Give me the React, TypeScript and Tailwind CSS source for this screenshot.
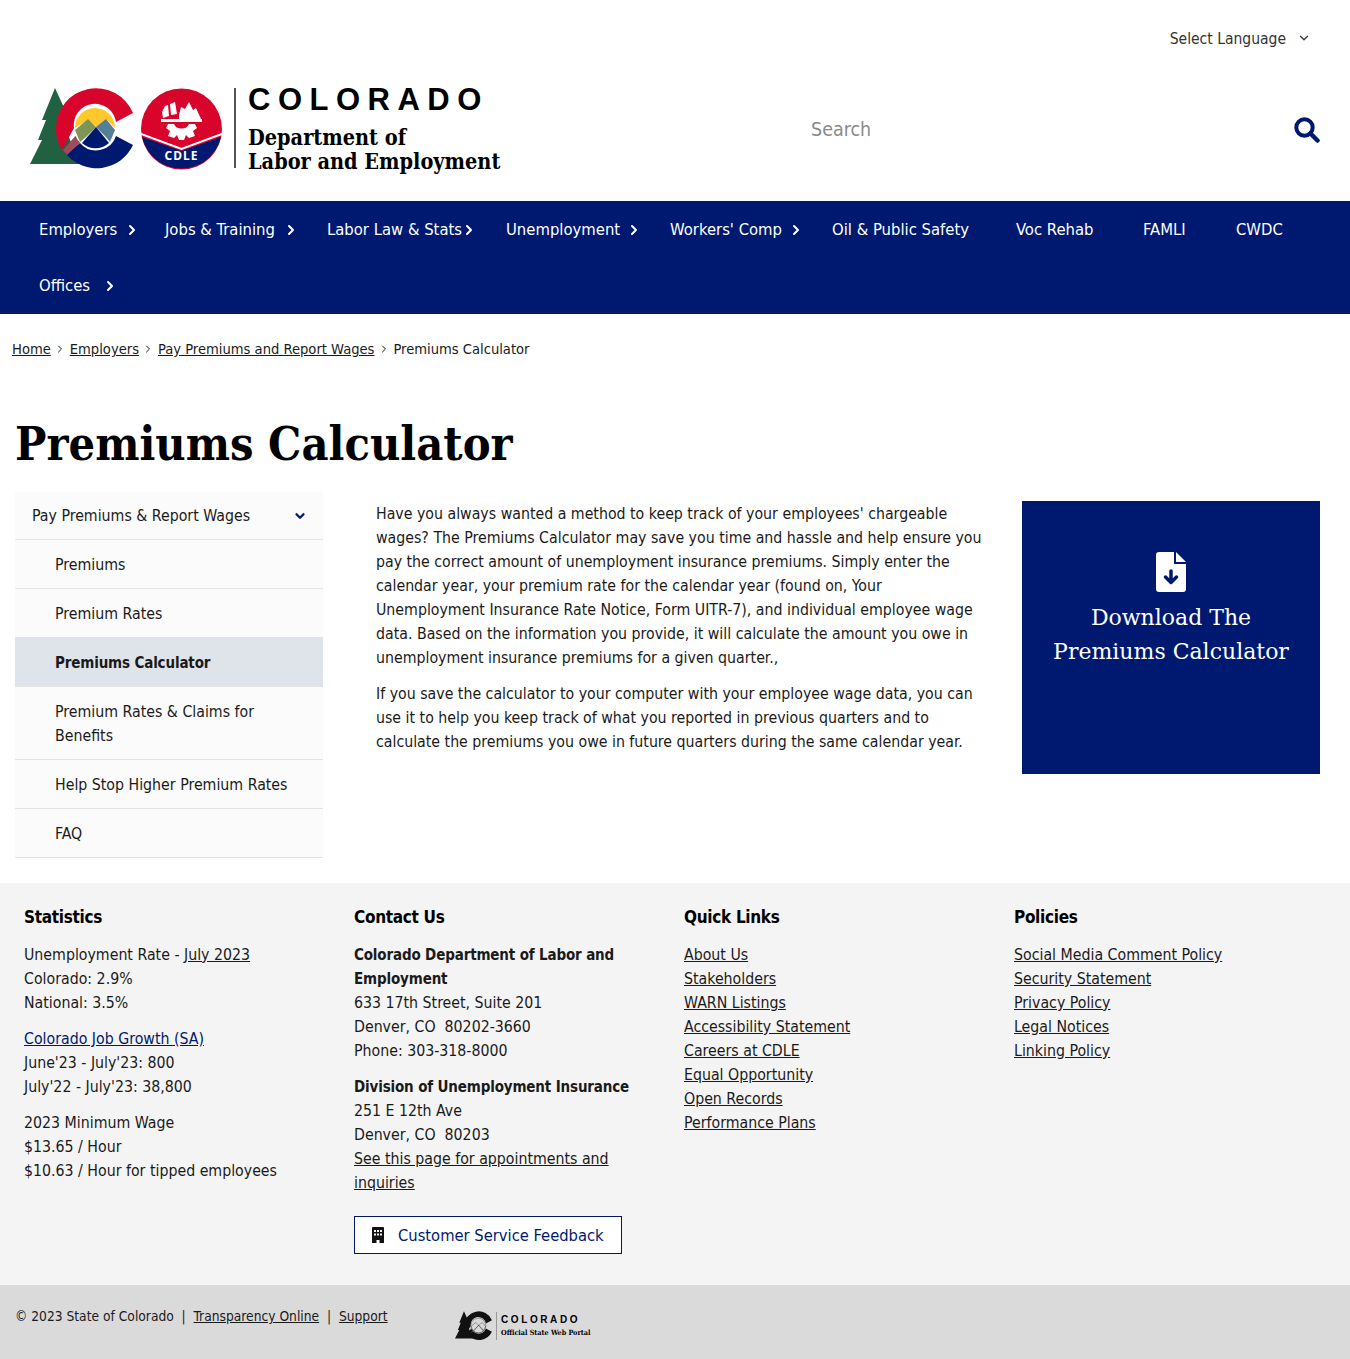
import { ChevronRight, ChevronDown } from 'lucide-react'

const BODY = "font-['DejaVu_Sans_Condensed','DejaVu_Sans',sans-serif]"
const SERIF = "font-['DejaVu_Serif_Condensed','DejaVu_Serif',serif]"
const STRONG = 'font-bold text-[15px] tracking-[-0.15px]'
const FOOT_HEAD = 'text-[17px] tracking-[-0.3px] leading-[24px] font-bold text-black mb-[14px]'

const navItems = [
  { label: 'Employers', width: 'w-[126px]', arrow: 'right-[1px]' },
  { label: 'Jobs & Training', width: 'w-[162px]', arrow: 'right-[4px]' },
  { label: 'Labor Law & Stats', width: 'w-[179px]', arrow: 'right-[5px]' },
  { label: 'Unemployment', width: 'w-[164px]', arrow: 'right-[4px]' },
  { label: "Workers' Comp", width: 'w-[162px]', arrow: 'right-[4px]' },
  { label: 'Oil & Public Safety', width: 'w-[184px]' },
  { label: 'Voc Rehab', width: 'w-[127px]' },
  { label: 'FAMLI', width: 'w-[93px]' },
  { label: 'CWDC', width: 'w-[100px]' },
  { label: 'Offices', width: 'w-[100px] -mt-[1px]', arrow: '-right-[3px]' },
]

const sideItems = [
  { label: 'Premiums' },
  { label: 'Premium Rates' },
  { label: 'Premiums Calculator', active: true },
  { label: 'Premium Rates & Claims for Benefits' },
  { label: 'Help Stop Higher Premium Rates' },
  { label: 'FAQ' },
]

function ColoradoMark({ mono = false }: { mono?: boolean }) {
  const red = mono ? '#111' : '#d9042b'
  const navy = mono ? '#111' : '#001970'
  const green = mono ? '#111' : '#1f6140'
  return (
    <svg viewBox="30 88 106 82" className="w-full h-full">
      <path d="M55 88 L66 112 L62 112 L70 130 L66 130 L80 164 L30 164 L42 140 L38 140 L46 120 L42 120 Z" fill={green} />
      <path d="M133 113 A40 40 0 0 0 56 128 A39 39 0 0 0 62 150 L74 128 A21 21 0 0 1 116 122 Z" fill={red} />
      <path d="M116 136 A21 21 0 0 1 80 143 L66 154 A40 40 0 0 0 133 145 Z" fill={navy} />
      <path d="M63 150 L78 133 L82 141 L67 155 Z" fill={mono ? '#111' : '#a04a5c'} />
      <circle cx="95" cy="128" r="21" fill={mono ? '#dadada' : '#fff'} stroke={mono ? '#111' : 'none'} />
      <path d="M75 128 A20 20 0 0 1 115 128 L107 120 L97 127 L88 120 Z" fill={mono ? 'none' : '#ffc92c'} />
      <path d="M75 130 L88 119 L96 127 L86 137 L80 142 Z" fill={mono ? 'none' : '#7f9558'} stroke={mono ? '#111' : 'none'} />
      <path d="M115 130 L106 119 L96 127 L106 137 L110 142 Z" fill={mono ? 'none' : '#557f96'} stroke={mono ? '#111' : 'none'} />
      <path d="M82 143 L96 127 L109 143 A20 20 0 0 1 82 143 Z" fill={mono ? 'none' : navy} stroke={mono ? '#111' : 'none'} />
    </svg>
  )
}

function CdleSeal() {
  return (
    <div className="relative w-[81px] h-[82px] shrink-0">
      <svg viewBox="0 0 81 82" className="w-full h-full">
        <circle cx="40.500" cy="41" r="40.500" fill="#d9042b" />
        <path d="M1 49 L40.500 63 L80 49 A40.500 40.500 0 0 1 1 49 Z" fill="#001970" />
        <path d="M0 46 L40.500 61 L81 46" fill="none" stroke="#fff" strokeWidth="2" />
        <path d="M22 30 L21 24 L24 18 L27 17 L28 28 Z M30 27 L29 16 L34 14 L36 26 Z M38 27 L40 19 L44 21 L48 14 L52 22 L55 20 L60 31 H38 Z" fill="#fff" />
        <path d="M20 31 H61 V34 H20 Z" fill="#fff" />
        <path d="M27 36 H33 A8 7 0 0 0 48 36 H54 L56 40 L52 43 L54 48 L48 50 L45 47 L43 52 H38 L36 47 L33 50 L27 48 L29 43 L25 40 Z" fill="#fff" />
      </svg>
      <span className="absolute left-0 right-0 top-[60px] text-center text-white text-[12px] leading-[16px] font-bold tracking-[1px] font-['Noto_Sans',sans-serif]">CDLE</span>
    </div>
  )
}

function FileDownIcon() {
  return (
    <svg viewBox="0 0 30 40" className="w-[30px] h-[40px]">
      <path d="M3 0 H18 V12 H30 V37 A3 3 0 0 1 27 40 H3 A3 3 0 0 1 0 37 V3 A3 3 0 0 1 3 0 Z" fill="#fff" />
      <path d="M20 0 L30 10 H20 Z" fill="#fff" />
      <path d="M15 19 V30.500 M9.500 25 L15 30.500 L20.500 25" fill="none" stroke="#001970" strokeWidth="3.500" strokeLinecap="round" strokeLinejoin="round" />
    </svg>
  )
}

function BuildingIcon() {
  return (
    <svg viewBox="0 0 12 16" className="w-[12px] h-[16px]">
      <path d="M1 0 H11 A1 1 0 0 1 12 1 V16 H7.500 V13 H4.500 V16 H0 V1 A1 1 0 0 1 1 0 Z" fill="#111" />
      <path d="M2 3 H4 V5 H2 Z M5 3 H7 V5 H5 Z M8 3 H10 V5 H8 Z M2 6.500 H4 V8.500 H2 Z M5 6.500 H7 V8.500 H5 Z M8 6.500 H10 V8.500 H8 Z" fill="#f4f4f4" />
    </svg>
  )
}

export default function App() {
  return (
    <div className={`${BODY} text-[15.750px] leading-[24px] text-[#1a1a1a] bg-white`}>
      <header className="h-[201px] flex flex-col">
        <div className="h-[77px] flex justify-end items-start pt-[27px] pr-[39px]">
          <span className="text-[#333] text-[15.500px]">Select Language</span>
          <ChevronDown size={14} strokeWidth={2.500} className="ml-[11px] mt-[4px] text-[#444]" />
        </div>
        <div className="flex items-start justify-between pl-[30px] pr-[30px]">
          <div className="flex items-start mt-[11px]">
            <div className="w-[106px] h-[82px] shrink-0"><ColoradoMark /></div>
            <div className="ml-[5px]"><CdleSeal /></div>
            <div className="w-[2px] h-[80px] bg-[#555] ml-[12px]" />
            <div className="ml-[12px] text-black">
              <div className="font-['Liberation_Sans',sans-serif] font-bold text-[31px] leading-[24px] tracking-[7.500px]">COLORADO</div>
              <div className={`${SERIF} font-bold text-[21.500px] leading-[24px] mt-[14px]`}>Department of<br />Labor and Employment</div>
            </div>
          </div>
          <div className="flex items-center w-[509px] mt-[37px] justify-between">
            <span className="text-[19.500px] leading-[30px] text-[#8a8a8a] pt-[1px]">Search</span>
            <svg viewBox="0 0 26 26" className="w-[26px] h-[26px]">
              <circle cx="10.500" cy="10.500" r="8.200" fill="none" stroke="#001970" strokeWidth="4" />
              <path d="M16.500 16.500 L23.500 23.500" stroke="#001970" strokeWidth="4.500" strokeLinecap="round" />
            </svg>
          </div>
        </div>
      </header>

      <nav className="bg-[#001970] h-[113px] px-[15px] flex flex-wrap content-start text-white text-[16.500px]">
        {navItems.map((item) => (
          <a key={item.label} className={`relative pl-6 h-[57px] flex items-center ${item.width}`}>
            {item.label}
            {item.arrow && <ChevronRight size={16} strokeWidth={3} className={`absolute top-[21px] text-white ${item.arrow}`} />}
          </a>
        ))}
      </nav>

      <div className="h-[71px] pl-[12px] pt-[23px] flex items-start text-[14.600px] leading-[24px]">
        <a className="underline">Home</a>
        <ChevronRight size={12} strokeWidth={2} className="mx-[3.500px] mt-[6px]" />
        <a className="underline">Employers</a>
        <ChevronRight size={12} strokeWidth={2} className="mx-[3.500px] mt-[6px]" />
        <a className="underline">Pay Premiums and Report Wages</a>
        <ChevronRight size={12} strokeWidth={2} className="mx-[3.500px] mt-[6px]" />
        <span>Premiums Calculator</span>
      </div>

      <h1 className={`${SERIF} font-bold text-[46.500px] leading-[58px] text-black pl-[15px] pt-[30px] h-[107px]`}>Premiums Calculator</h1>

      <main className="flex items-start h-[391px] pl-[15px] pr-[30px]">
        <aside className="w-[308px] shrink-0 bg-[#fbfbfb]">
          <div className="h-[48px] pl-[17px] pr-[16px] flex items-center justify-between border-b border-[#e3e3e3]">
            <span>Pay Premiums &amp; Report Wages</span>
            <ChevronDown size={14} strokeWidth={4} className="text-[#001970]" />
          </div>
          {sideItems.map((s) => (
            <div
              key={s.label}
              className={`pl-[40px] pr-[30px] pt-[13px] pb-[11px] border-b border-[#e3e3e3] ${s.active ? `bg-[#dfe4ea] ${STRONG}` : ''}`}
            >
              {s.label}
            </div>
          ))}
        </aside>
        <section className="w-[608px] ml-[53px] mt-[10px]">
          <p>
            Have you always wanted a method to keep track of your employees' chargeable wages? The Premiums Calculator may save you time and hassle and help ensure you pay the correct amount of unemployment insurance premiums. Simply enter the calendar year, your premium rate for the calendar year (found on, Your Unemployment Insurance Rate Notice, Form UITR-7), and individual employee wage data. Based on the information you provide, it will calculate the amount you owe in unemployment insurance premiums for a given quarter.,
          </p>
          <p className="mt-[12px]">
            If you save the calculator to your computer with your employee wage data, you can use it to help you keep track of what you reported in previous quarters and to calculate the premiums you owe in future quarters during the same calendar year.
          </p>
        </section>
        <a className="w-[298px] h-[273px] ml-auto mt-[9px] bg-[#001970] text-white flex flex-col items-center pt-[51px]">
          <FileDownIcon />
          <span className={`font-['DejaVu_Serif',serif] text-[22px] leading-[34px] text-center mt-[9px]`}>Download The<br />Premiums Calculator</span>
        </a>
      </main>

      <footer className="bg-[#f4f4f4] h-[402px] pl-[24px] pt-[22px] grid grid-cols-[330px_330px_330px_1fr]">
        <div>
          <h3 className={FOOT_HEAD}>Statistics</h3>
          <p>Unemployment Rate - <a className="underline">July 2023</a><br />Colorado: 2.9%<br />National: 3.5%</p>
          <p className="mt-[12px]"><a className="underline text-[#001970]">Colorado Job Growth (SA)</a><br />June'23 - July'23: 800<br />July'22 - July'23: 38,800</p>
          <p className="mt-[12px]">2023 Minimum Wage<br />$13.65 / Hour<br />$10.63 / Hour for tipped employees</p>
        </div>
        <div>
          <h3 className={FOOT_HEAD}>Contact Us</h3>
          <p className="w-[290px]"><b className={STRONG}>Colorado Department of Labor and Employment</b><br />633 17th Street, Suite 201<br />Denver, CO&nbsp; 80202-3660<br />Phone: 303-318-8000</p>
          <p className="mt-[12px] w-[290px]"><b className={STRONG}>Division of Unemployment Insurance</b><br />251 E 12th Ave<br />Denver, CO&nbsp; 80203<br /><a className="underline">See this page for appointments and inquiries</a></p>
          <a className="mt-[21px] w-[268px] h-[38px] border border-[#001970] bg-white text-[#001970] flex items-center pl-[17px] text-[16.400px]">
            <BuildingIcon />
            <span className="ml-[14px] pt-[1px]">Customer Service Feedback</span>
          </a>
        </div>
        <div>
          <h3 className={FOOT_HEAD}>Quick Links</h3>
          <ul className="underline">
            {['About Us', 'Stakeholders', 'WARN Listings', 'Accessibility Statement', 'Careers at CDLE', 'Equal Opportunity', 'Open Records', 'Performance Plans'].map((l) => <li key={l}>{l}</li>)}
          </ul>
        </div>
        <div>
          <h3 className={FOOT_HEAD}>Policies</h3>
          <ul className="underline">
            {['Social Media Comment Policy', 'Security Statement', 'Privacy Policy', 'Legal Notices', 'Linking Policy'].map((l) => <li key={l}>{l}</li>)}
          </ul>
        </div>
      </footer>

      <div className="bg-[#dadada] h-[74px] pl-[15px] flex items-start text-[13.700px] leading-[20px]">
        <div className="w-[440px] pt-[21px]">
          © 2023 State of Colorado &nbsp;|&nbsp; <a className="underline">Transparency Online</a> &nbsp;|&nbsp; <a className="underline">Support</a>
        </div>
        <div className="flex items-center mt-[26px]">
          <div className="w-[38px] h-[30px]"><ColoradoMark mono /></div>
          <div className="w-px h-[28px] bg-[#999] ml-[3px]" />
          <div className="ml-[4px] text-black">
            <div className="font-['Liberation_Sans',sans-serif] font-bold text-[10px] leading-[13px] tracking-[2.600px]">COLORADO</div>
            <div className={`${SERIF} font-bold text-[7.200px] leading-[13px]`}>Official State Web Portal</div>
          </div>
        </div>
      </div>
    </div>
  )
}
